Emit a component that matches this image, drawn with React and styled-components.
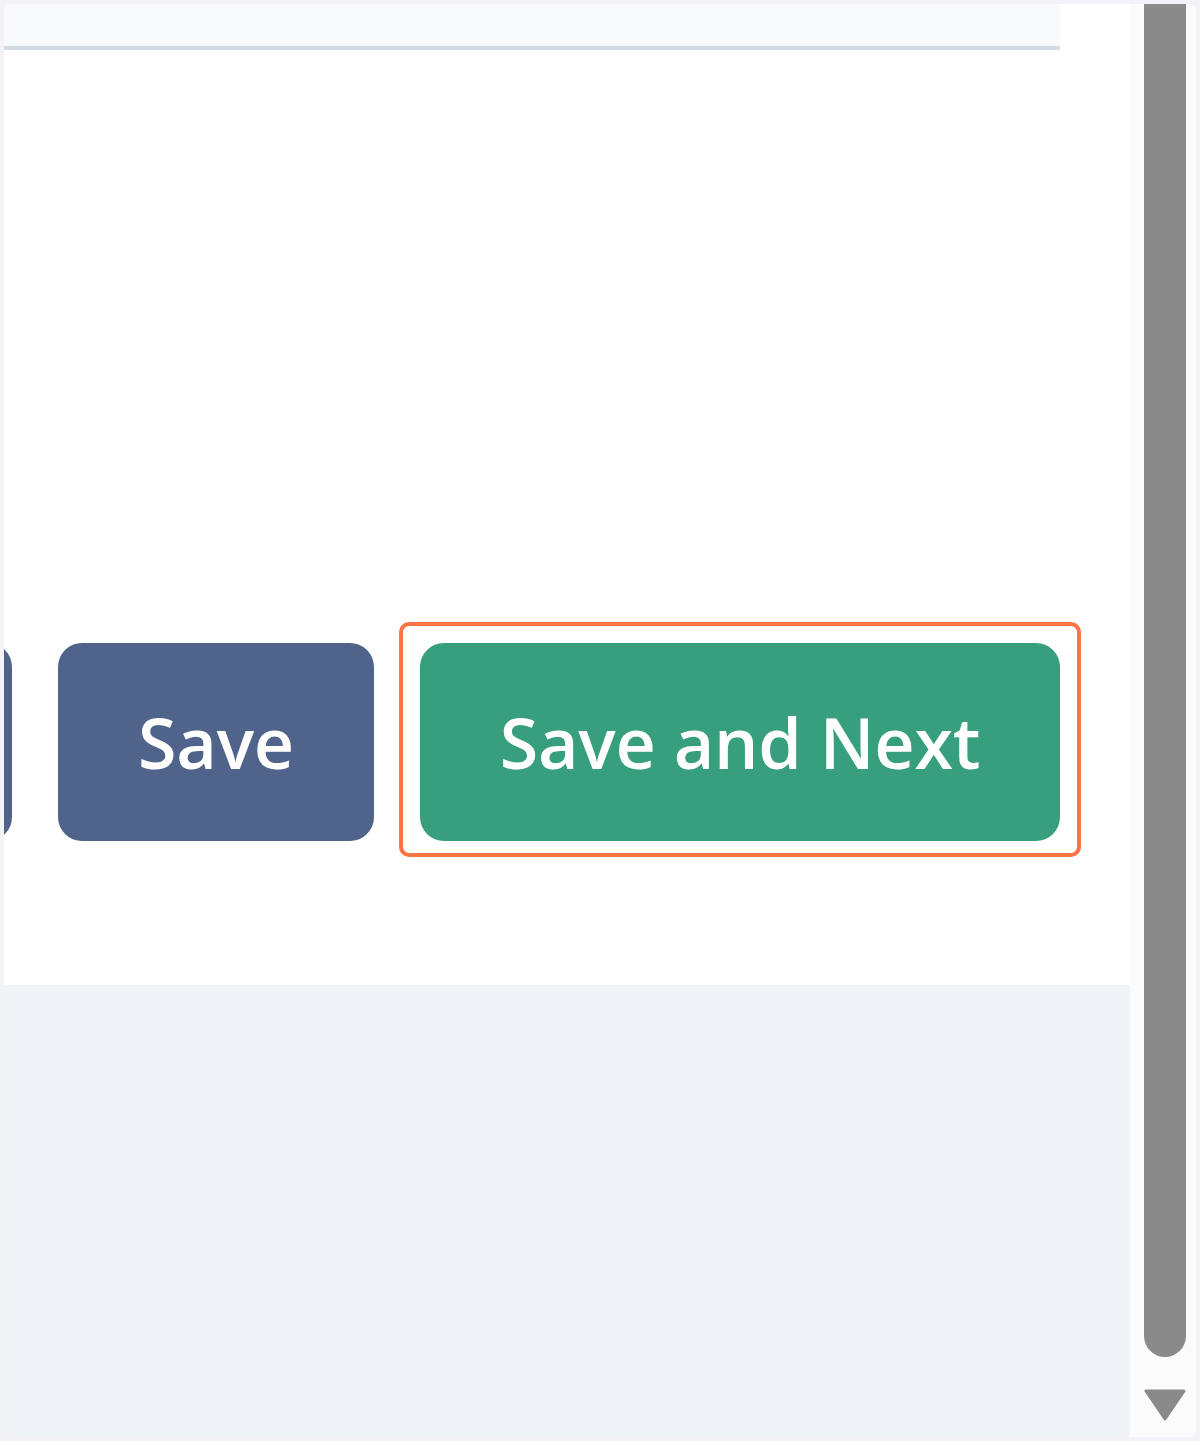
import React from "react";
import styled, { createGlobalStyle } from "styled-components";

const GlobalStyle = createGlobalStyle`
  html, body {
    margin: 0;
    padding: 0;
    background: #f3f2f7;
  }
  body {
    font-family: "Open Sans", "Noto Sans", sans-serif;
  }
`;

const Frame = styled.div`
  margin: 4px;
  height: 1433px;
  display: flex;
  background: #ffffff;
  border-radius: 6px;
  overflow: hidden;
`;

const Main = styled.div`
  flex: 1;
  display: flex;
  flex-direction: column;
  overflow: hidden;
`;

const TopBand = styled.div`
  width: 1056px;
  height: 42px;
  background: #f8f9fb;
  border-bottom: 4px solid #d3dae0;
`;

const Content = styled.div`
  height: 935px;
  background: #ffffff;
  display: flex;
  flex-direction: column;
`;

const Actions = styled.div`
  margin-top: 572px;
  display: flex;
  align-items: flex-start;
  justify-content: flex-end;
  gap: 46px;
  padding-right: 49px;
`;

const Button = styled.button`
  flex-shrink: 0;
  width: ${(p) => p.$width}px;
  height: 198px;
  border: none;
  border-radius: 24px;
  background: ${(p) => p.$bg};
  color: #ffffff;
  font-family: "Open Sans", "Noto Sans", sans-serif;
  font-weight: 600;
  font-size: 70px;
  letter-spacing: -0.2px;
  padding: 0;
  cursor: pointer;
`;

const PrevButton = styled(Button)`
  margin-top: 21px;
`;

const SaveButton = styled(Button)`
  margin-top: 21px;
`;

const FocusRing = styled.span`
  flex-shrink: 0;
  margin-left: -21px;
  padding: 17px 17px 12px;
  border: 4px solid #ff7443;
  border-radius: 10px;
  display: flex;
`;

const Footer = styled.div`
  flex: 1;
  background: #f0f3f8;
`;

const Scrollbar = styled.div`
  width: 66px;
  background: #fbfbfb;
  display: flex;
  flex-direction: column;
  align-items: flex-start;
  padding-left: 14px;
  box-sizing: border-box;
`;

const Thumb = styled.div`
  width: 42px;
  height: 1353px;
  background: #8a8a8a;
  border-radius: 0 0 21px 21px;
`;

const ArrowDown = styled.svg`
  margin-top: 32px;
  display: block;
`;

export default function App() {
  return (
    <>
      <GlobalStyle />
      <Frame>
        <Main>
          <TopBand />
          <Content>
            <Actions>
              <PrevButton $width={316} $bg="#50638b" aria-label="Back" />
              <SaveButton $width={316} $bg="#50638b">
                Save
              </SaveButton>
              <FocusRing>
                <Button $width={640} $bg="#379e7e">
                  Save and Next
                </Button>
              </FocusRing>
            </Actions>
          </Content>
          <Footer />
        </Main>
        <Scrollbar>
          <Thumb />
          <ArrowDown width="42" height="32" viewBox="0 0 42 32">
            <path d="M2 2 H40 L21 30 Z" fill="#8a8a8a" strokeLinejoin="round" stroke="#8a8a8a" strokeWidth="3" />
          </ArrowDown>
        </Scrollbar>
      </Frame>
    </>
  );
}
